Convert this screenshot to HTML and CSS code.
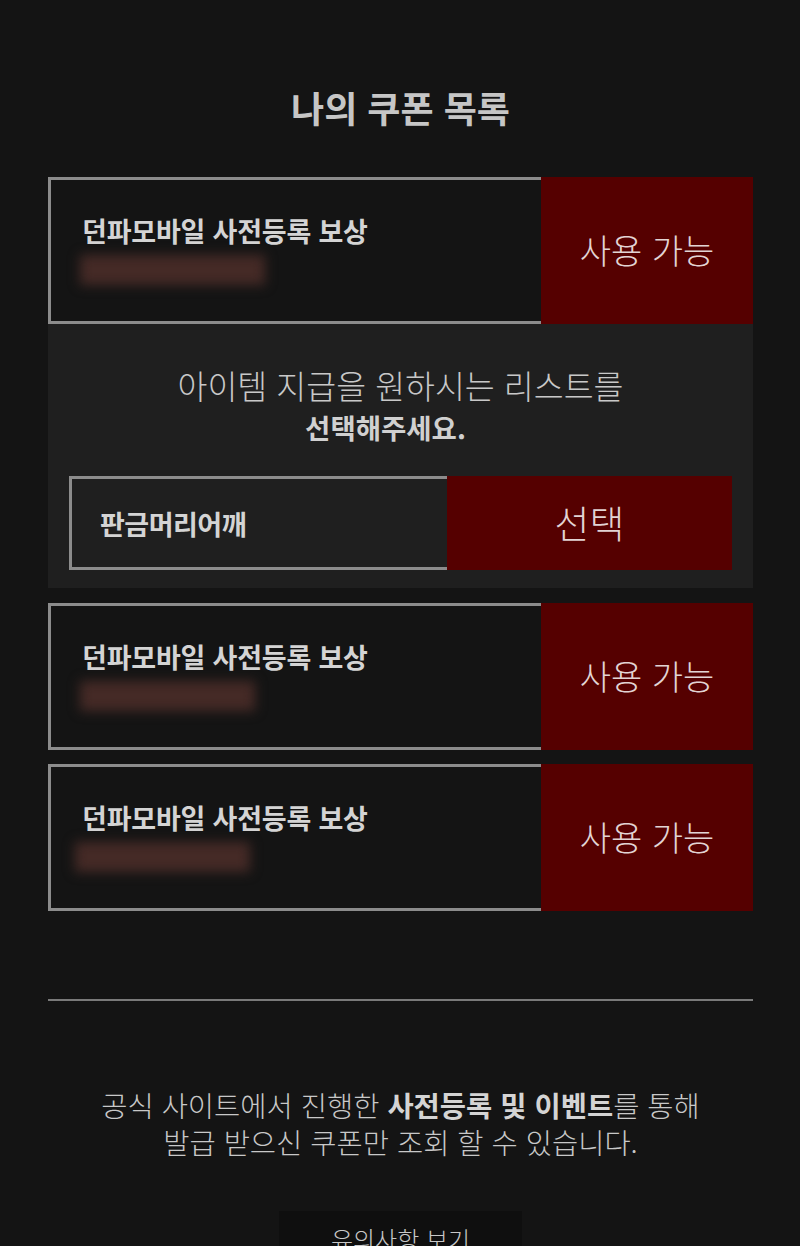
FILE: index.html
```html
<!DOCTYPE html>
<html lang="ko">
<head>
    <meta charset="UTF-8">
    <meta name="viewport" content="width=device-width, initial-scale=1.0">
    <title>나의 쿠폰 목록</title>
    <link rel="stylesheet" href="styles.css">
</head>
<body>
    <div class="container">
        <h1>나의 쿠폰 목록</h1>

        <div class="coupon">
            <div class="coupon-info">
                <p class="coupon-title">던파모바일 사전등록 보상</p>
                <div class="coupon-code code-a"></div>
            </div>
            <div class="coupon-state">사용 가능</div>
        </div>

        <div class="select-panel">
            <p class="select-guide">아이템 지급을 원하시는 리스트를<br><strong>선택해주세요.</strong></p>
            <div class="select-row">
                <div class="select-item">판금머리어깨</div>
                <div class="select-btn">선택</div>
            </div>
        </div>

        <div class="coupon">
            <div class="coupon-info">
                <p class="coupon-title">던파모바일 사전등록 보상</p>
                <div class="coupon-code code-b"></div>
            </div>
            <div class="coupon-state">사용 가능</div>
        </div>

        <div class="coupon">
            <div class="coupon-info">
                <p class="coupon-title">던파모바일 사전등록 보상</p>
                <div class="coupon-code code-c"></div>
            </div>
            <div class="coupon-state">사용 가능</div>
        </div>

        <hr class="divider">

        <p class="notice">공식 사이트에서 진행한 <strong>사전등록 및 이벤트</strong>를 통해<br>발급 받으신 쿠폰만 조회 할 수 있습니다.</p>

        <div class="notice-btn-wrap">
            <div class="notice-btn">유의사항 보기</div>
        </div>
    </div>
</body>
</html>
```

FILE: styles.css
```css
body {
    font-family: "Noto Sans CJK KR", "Noto Sans", sans-serif;
    background-color: #141414;
    color: #d2d2d2;
    margin: 0;
    padding: 0;
}
.container {
    padding: 82px 47px 0 48px;
}
h1 {
    margin: 0 0 45px;
    text-align: center;
    font-size: 36px;
    line-height: 50px;
    font-weight: bold;
    color: #c6c6c6;
}
.coupon {
    display: flex;
    height: 147px;
    margin-bottom: 14px;
}
.coupon-info {
    width: 493px;
    box-sizing: border-box;
    border: 3px solid #8c8c8c;
    border-right: 0;
    padding: 33px 0 0 31px;
}
.coupon-title {
    margin: 0;
    font-size: 27px;
    line-height: 36px;
    font-weight: bold;
    letter-spacing: -0.2px;
    color: #d4d4d4;
}
.coupon-code {
    height: 30px;
    margin-top: 6px;
    margin-left: -2px;
    background-color: #452a26;
    filter: blur(6px);
}
.code-a { width: 185px; }
.code-b { width: 175px; }
.code-c { width: 175px; margin-left: -7px; }
.coupon-state {
    flex: 1;
    display: flex;
    align-items: center;
    justify-content: center;
    padding-bottom: 2px;
    background-color: #550000;
    font-size: 34px;
    font-weight: 300;
    color: #e2d4d4;
}
.select-panel {
    margin: -14px 0 15px;
    padding: 41px 21px 18px;
    background-color: #1f1f1f;
}
.select-guide {
    margin: 0 0 29px;
    text-align: center;
    font-size: 32.5px;
    line-height: 40px;
    font-weight: 300;
    color: #c8c8c8;
}
.select-guide strong {
    padding-right: 30px;
    font-size: 27.5px;
    font-weight: bold;
    color: #d0d0d0;
}
.select-row {
    display: flex;
    height: 94px;
}
.select-item {
    width: 378px;
    box-sizing: border-box;
    border: 3px solid #8c8c8c;
    border-right: 0;
    padding-left: 28px;
    display: flex;
    align-items: center;
    font-size: 27px;
    font-weight: bold;
    letter-spacing: -0.5px;
    color: #d4d4d4;
}
.select-btn {
    flex: 1;
    display: flex;
    align-items: center;
    justify-content: center;
    padding-bottom: 4px;
    background-color: #550000;
    font-size: 38px;
    font-weight: 300;
    color: #e2d4d4;
}
.divider {
    margin: 88px 0 0;
    border: 0;
    border-top: 2px solid #7a7a7a;
}
.notice {
    margin: 85px 0 0;
    text-align: center;
    font-size: 28.5px;
    line-height: 37px;
    font-weight: 300;
    color: #c8c8c8;
}
.notice strong {
    font-weight: bold;
    color: #d4d4d4;
}
.notice-btn-wrap {
    display: flex;
    justify-content: center;
    margin-top: 51px;
}
.notice-btn {
    width: 243px;
    padding: 12px 0;
    text-align: center;
    background-color: #0f0f0f;
    font-size: 24px;
    line-height: 32px;
    font-weight: 300;
    color: #c8c8c8;
}
```
